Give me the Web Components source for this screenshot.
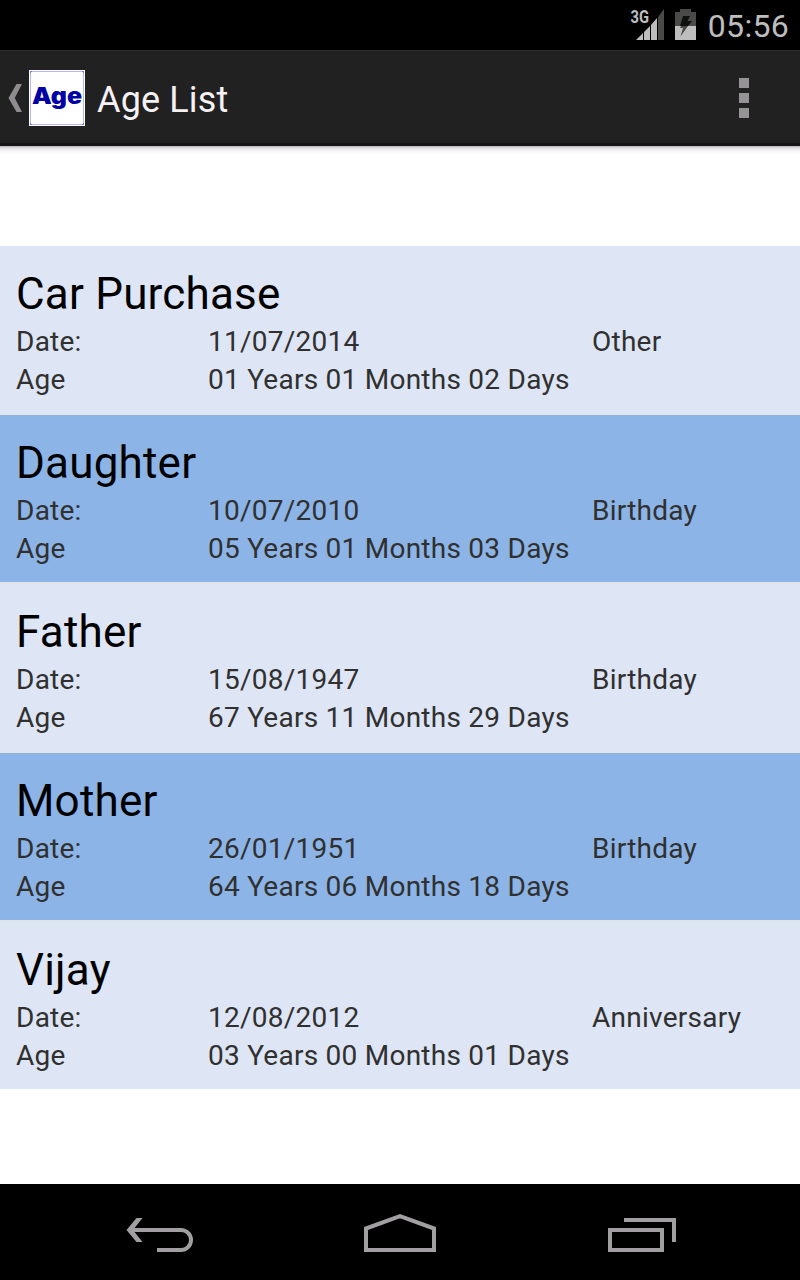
<!DOCTYPE html>
<html lang="en">
<head>
<meta charset="utf-8">
<title>Age List</title>
<style>
html,body{margin:0;height:100%;background:#fff}
body{font-family:Roboto,"Noto Sans",sans-serif}
</style>
</head>
<body>
<age-screen></age-screen>
<script>
const define = (name, html) => customElements.define(name, class extends HTMLElement {
  constructor() {
    super();
    this.attachShadow({ mode: 'open' }).innerHTML = html;
  }
});

define('status-bar', `
<style>
:host{display:flex;justify-content:flex-end;align-items:center;height:50px;box-sizing:border-box;padding-right:11px;background:#000;color:#bebebe;font-size:32px}
svg{display:block;flex:none}
.time{line-height:50px;margin:2px 0 0 9.500px;letter-spacing:.3px}
.net{font:700 18px/1 Roboto,sans-serif}
</style>
<svg width="70" height="50" viewBox="628 0 70 50">
<text class="net" x="630.500" y="23" fill="#bebebe" textLength="18.500" lengthAdjust="spacingAndGlyphs">3G</text>
<path fill="#bebebe" d="M636 40L643 33V40ZM644 40V32L650 26V40ZM651 40V25L657 18V40Z"/>
<path fill="#4a4b48" d="M658 40V17L664 9V40Z"/>
<path fill="#4a4b48" d="M675 12H680V9H691V12H696V26H675Z"/>
<path fill="#bebebe" d="M675 26H696V40H675Z"/>
<path fill="#0e110e" d="M683 16H690L687.500 21H692L688 26H680Z"/>
<path fill="#4a4b48" d="M681 26H688L680.500 36.500L683 28H680Z"/>
</svg>
<span class="time">05:56</span>`);

define('action-bar', `
<style>
:host{display:flex;align-items:center;height:96px;box-sizing:border-box;background:#212121;border-top:1px solid #2b2b2b;border-bottom:3px solid #161616;color:#f5f1f5;padding:0 51px 0 8px}
svg{display:block;flex:none}
.up{margin-right:6px}
.title{flex:1;font-size:36px;line-height:44px;margin:5px 0 0 12px;letter-spacing:.15px}
.logo,.up,.menu{margin-top:2px}
.menu{display:grid;gap:5px}
.menu i{width:10px;height:10px;background:#969396}
.name{font:900 22.500px/1 Inter,sans-serif}
</style>
<svg class="up" width="15" height="28" viewBox="8 84 15 28"><path fill="#8e8c8e" d="M16.500 84H22L14.800 98L22 112H16.500L8.500 98Z"/></svg>
<svg class="logo" width="56" height="56" viewBox="0 0 56 56"><path fill="#fff" d="M0 0H56V56H0Z"/><path fill="none" stroke="#b4b6f8" d="M1.500 1.500H54.500V54.500H1.500Z"/><path fill="#7a7cec" d="M1 1H3V2H2V3H1ZM53 1H55V3H54V2H53ZM1 53H2V54H3V55H1ZM54 53H55V55H53V54H54Z"/><text class="name" x="3" y="34" fill="#0000a4" textLength="50" lengthAdjust="spacingAndGlyphs">Age</text></svg>
<span class="title"><slot></slot></span>
<div class="menu"><i></i><i></i><i></i></div>`);

customElements.define('age-row', class extends HTMLElement {
  connectedCallback() {
    const v = n => this.getAttribute(n);
    this.attachShadow({ mode: 'open' }).innerHTML = `
<style>
:host{display:block;height:171px;box-sizing:border-box;background:#dee5f4;padding:23px 16px 0;color:#303030;font-size:28px;line-height:38px;border-bottom:1px solid #e3e4e2;letter-spacing:.25px;margin-top:-1px;border-top:1px solid #e3e4e2;padding-top:22px}
:host(:first-child){height:169px;padding-top:21px;margin-top:0;border-top:0}
:host(:last-child){height:169px;border-bottom:0}
:host([alt]){background:#8cb4e6;height:168px;padding-top:21px;margin-top:0;border-top:0}
h2{margin:0;font-weight:400;font-size:44px;line-height:54px;color:#000;letter-spacing:.2px;height:56px}
.grid{display:grid;grid-template-columns:192px 384px 1fr;white-space:nowrap}
</style>
<h2>${v('name')}</h2>
<div class="grid"><span>Date:</span><span>${v('date')}</span><span>${v('kind')}</span><span>Age</span><span>${v('age')}</span></div>`;
  }
});

define('nav-bar', `
<style>
:host{display:block;height:96px;background:#000}
svg{display:block}
</style>
<svg width="800" height="96" viewBox="0 1184 800 96" fill="none" stroke="#a29fa2" stroke-width="4">
<path d="M129 1230H181A10 10 0 0 1 181 1250H157"/>
<path fill="#a29fa2" stroke="none" d="M136.500 1218H142.500L133 1230L142.500 1242H136.500L126.500 1230Z"/>
<path d="M366 1250V1228.500L400 1216.200L434 1228.500V1250Z"/>
<path d="M610 1230H662V1250H610ZM624 1220H674V1242"/>
</svg>`);

define('age-screen', `
<style>
:host{display:flex;flex-direction:column;height:1280px;background:#fff}
main{flex:1;box-sizing:border-box;padding-top:100px;background:linear-gradient(#b5b3b5 0,#e2e0e2 2px,#f8f4f8 5px,#fff 9px)}
</style>
<status-bar></status-bar>
<action-bar>Age List</action-bar>
<main>
<age-row name="Car Purchase" date="11/07/2014" kind="Other" age="01 Years 01 Months 02 Days"></age-row>
<age-row alt name="Daughter" date="10/07/2010" kind="Birthday" age="05 Years 01 Months 03 Days"></age-row>
<age-row name="Father" date="15/08/1947" kind="Birthday" age="67 Years 11 Months 29 Days"></age-row>
<age-row alt name="Mother" date="26/01/1951" kind="Birthday" age="64 Years 06 Months 18 Days"></age-row>
<age-row name="Vijay" date="12/08/2012" kind="Anniversary" age="03 Years 00 Months 01 Days"></age-row>
</main>
<nav-bar></nav-bar>`);
</script>
</body>
</html>
